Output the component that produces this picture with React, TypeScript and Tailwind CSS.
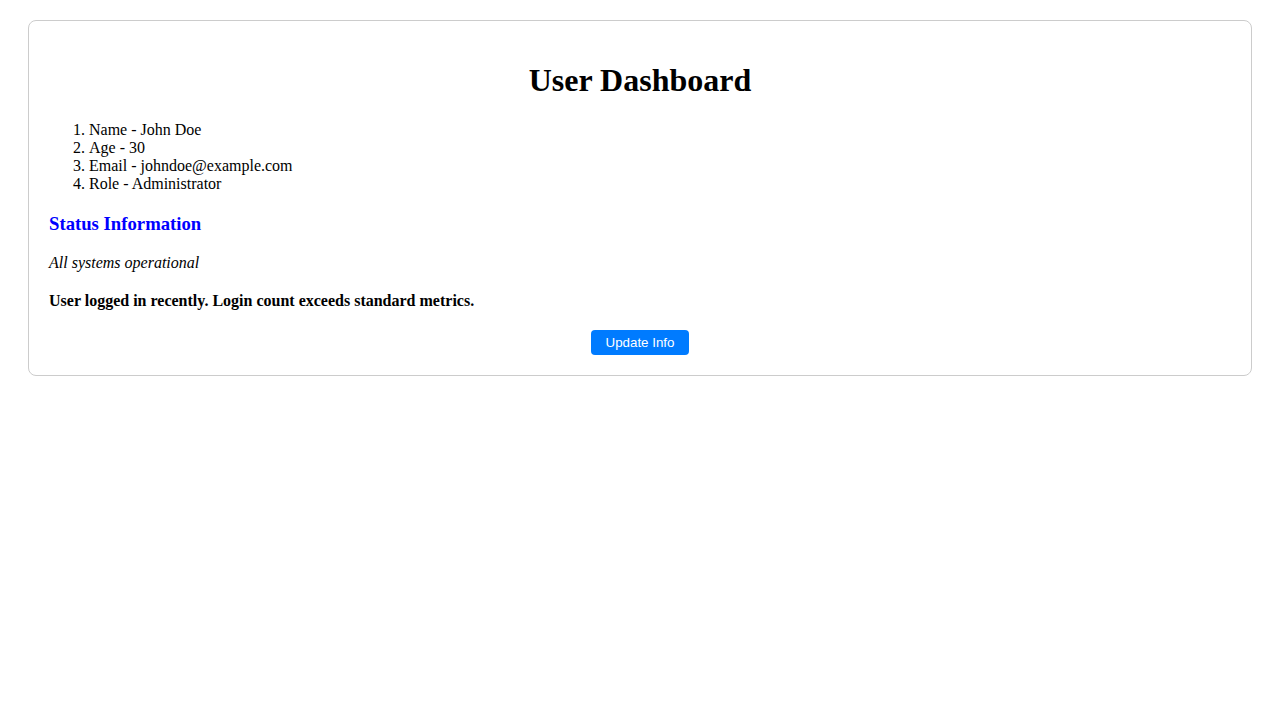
export default function App() {
  return (
    <div className="bg-white min-h-screen px-2" style={{ fontFamily: '"Liberation Serif", "Times New Roman", serif' }}>
      <div className="mx-5 mt-5 border border-[#cccccc] rounded-lg p-5 text-black text-[16px] leading-[normal]">
        <h1 className="text-center font-bold text-[32px] leading-[normal] mt-[21.44px] mb-[21.44px]">User Dashboard</h1>
        <ol className="list-decimal pl-10 mb-[19.72px]">
          <li>Name - John Doe</li>
          <li>Age - 30</li>
          <li>Email - johndoe@example.com</li>
          <li>Role - Administrator</li>
        </ol>
        <h3 className="text-[#0000ff] font-bold text-[18.72px] leading-[normal] mb-[19.72px]">Status Information</h3>
        <p className="italic mb-5">All systems operational</p>
        <p className="font-bold">User logged in recently. Login count exceeds standard metrics.</p>
        <div className="text-center mt-5">
          <button
            className="bg-[#007bff] text-white rounded-[4px] px-[15px] py-[5px] text-[13.333px] leading-[normal] align-top"
            style={{ fontFamily: '"Liberation Sans", Arial, sans-serif' }}
          >
            Update Info
          </button>
        </div>
      </div>
    </div>
  );
}
